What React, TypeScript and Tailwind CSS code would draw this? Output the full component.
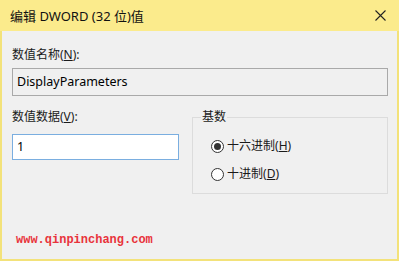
import React from "react";

const ui = "font-['Segoe_UI','Noto_Sans','Noto_Sans_CJK_SC',sans-serif]";

function Radio({ checked, label, keyChar }: { checked?: boolean; label: string; keyChar: string }) {
  return (
    <div className="flex h-[20px] items-center gap-[3px]">
      <span className="flex h-[13px] w-[13px] items-center justify-center rounded-full border border-[#333333] bg-white">
        {checked && <span className="h-[7px] w-[7px] rounded-full bg-[#333333]" />}
      </span>
      <span className="text-[12px] leading-[16px] text-[#1a1a1a]">
        {label}(<span className="underline">{keyChar}</span>)
      </span>
    </div>
  );
}

export default function App() {
  return (
    <div className={`${ui} flex h-[261px] w-[399px] flex-col border-x-2 border-b-2 border-[#f3e27a] bg-[#f0f0f0]`}>
      {/* title bar */}
      <div className="-mx-[2px] flex h-[31px] items-center justify-between bg-[#fbeb8c] pl-[10px] pr-[12px]">
        <span className="text-[13px] leading-[16px] text-[#111111]">编辑 DWORD (32 位)值</span>
        <svg width="11" height="11" viewBox="0 0 11 11" className="mr-[1px]">
          <path d="M0.5 0.5 L10.5 10.5 M10.5 0.5 L0.5 10.5" stroke="#222" strokeWidth="1.1" fill="none" />
        </svg>
      </div>

      <div className="flex flex-col pl-[10px] pr-[8px] pt-[16px]">
        <div className="text-[12px] leading-[16px] text-[#1a1a1a]">
          数值名称(<span className="underline">N</span>):
        </div>
        <div className="mt-[5px] flex h-[28px] w-[376px] items-center border border-[#a9a9a9] bg-[#f0f0f0] pl-[4px] text-[12.5px] text-black">
          DisplayParameters
        </div>

        <div className="mt-[13px] flex items-start gap-[13px]">
          <div className="flex w-[167px] flex-col">
            <div className="text-[12px] leading-[16px] text-[#1a1a1a]">
              数值数据(<span className="underline">V</span>):
            </div>
            <div className="mt-[9px] flex h-[26px] items-center border border-[#7aaee0] bg-white pl-[4px] text-[12.5px] text-black">
              1
            </div>
          </div>

          <fieldset className="h-[85px] w-[196px] border border-[#dcdcdc] px-[8px]">
            <legend className="px-[1px] text-[12px] leading-[16px] text-[#1a1a1a]">基数</legend>
            <div className="flex flex-col gap-[8px] pl-[10px] pt-[11px]">
              <Radio checked label="十六进制" keyChar="H" />
              <Radio label="十进制" keyChar="D" />
            </div>
          </fieldset>
        </div>

        <div className="ml-[4px] mt-[38px] font-['Liberation_Mono',monospace] text-[12px] font-semibold leading-[16px] text-[#e8333b]">
          www.qinpinchang.com
        </div>
      </div>
    </div>
  );
}
